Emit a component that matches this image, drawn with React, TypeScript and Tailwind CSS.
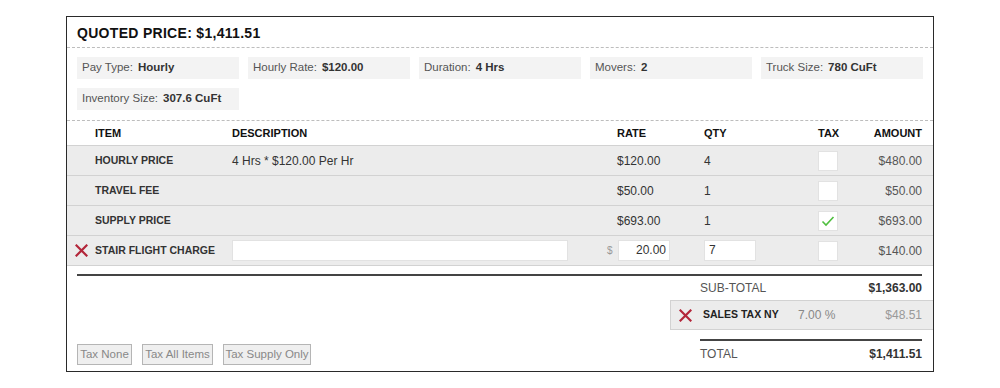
import React from 'react';

const XMark: React.FC = () => (
  <svg width="13" height="13" viewBox="0 0 13 13" className="block">
    <path d="M1.5 1.5 L11.5 11.5 M11.5 1.5 L1.5 11.5" stroke="#b3263a" strokeWidth="2.2" strokeLinecap="square" fill="none" />
  </svg>
);

const Check: React.FC = () => (
  <svg width="14" height="12" viewBox="0 0 14 12" className="block">
    <path d="M1.5 6.5 L5 10 L12.5 2" stroke="#4fbf3f" strokeWidth="1.6" fill="none" />
  </svg>
);

const TaxBox: React.FC<{ checked?: boolean }> = ({ checked }) => (
  <div className="w-[20px] h-[20px] bg-white border border-[#e2e2e2] flex items-center justify-center">
    {checked && <Check />}
  </div>
);

const App: React.FC = () => {
  const info = [
    { label: 'Pay Type:', value: 'Hourly' },
    { label: 'Hourly Rate:', value: '$120.00' },
    { label: 'Duration:', value: '4 Hrs' },
    { label: 'Movers:', value: '2' },
    { label: 'Truck Size:', value: '780 CuFt' },
    { label: 'Inventory Size:', value: '307.6 CuFt' },
  ];

  const items = [
    { name: 'HOURLY PRICE', desc: '4 Hrs * $120.00 Per Hr', rate: '$120.00', qty: '4', tax: false, amount: '$480.00' },
    { name: 'TRAVEL FEE', desc: '', rate: '$50.00', qty: '1', tax: false, amount: '$50.00' },
    { name: 'SUPPLY PRICE', desc: '', rate: '$693.00', qty: '1', tax: true, amount: '$693.00' },
  ];

  // tax buttons with their measured widths
  const buttons = [
    { label: 'Tax None', w: 'w-[55px]' },
    { label: 'Tax All Items', w: 'w-[71px]' },
    { label: 'Tax Supply Only', w: 'w-[88px]' },
  ];

  const cols = 'grid grid-cols-[28px_137px_375px_97px_114px_40px_1fr] items-center';

  return (
    <div className="w-[1000px] h-[388px] bg-white pt-[16px] pl-[66px]" style={{ fontFamily: '"Liberation Sans", Arial, sans-serif' }}>
      <div className="w-[868px] h-[356px] border border-[#2a2a2a] flex flex-col">
        {/* title */}
        <div className="h-[31px] px-[10px] pt-[3px] flex items-center border-b border-dashed border-[#bdbdbd]">
          <span className="text-[14px] font-bold text-[#111] tracking-[0.3px]">QUOTED PRICE: $1,411.51</span>
        </div>

        {/* job info */}
        <div className="px-[10px] pt-[9px] pb-[10px] grid grid-cols-5 gap-x-[9px] gap-y-[9px] border-b border-dashed border-[#bdbdbd]">
          {info.map(i => (
            <div key={i.label} className="h-[22px] bg-[#f3f3f3] px-[5px] flex items-center text-[11.5px]">
              <span className="text-[#555]">{i.label}</span>
              <span className="ml-[5px] font-bold text-[#333]">{i.value}</span>
            </div>
          ))}
        </div>

        {/* table header */}
        <div className={`${cols} h-[24px] text-[11px] font-bold text-[#111]`}>
          <span />
          <span>ITEM</span>
          <span>DESCRIPTION</span>
          <span className="pl-[10px]">RATE</span>
          <span>QTY</span>
          <span>TAX</span>
          <span className="text-right pr-[11px]">AMOUNT</span>
        </div>

        {items.map(it => (
          <div key={it.name} className={`${cols} h-[30px] pt-[1px] bg-[#ececec] border-t border-[#d2d2d2] text-[12px] text-[#333]`}>
            <span />
            <span className="text-[10.5px] font-bold">{it.name}</span>
            <span>{it.desc}</span>
            <span className="pl-[10px]">{it.rate}</span>
            <span>{it.qty}</span>
            <TaxBox checked={it.tax} />
            <span className="text-right pr-[11px] text-[#555]">{it.amount}</span>
          </div>
        ))}

        <div className={`${cols} h-[31px] bg-[#ececec] border-t border-b border-[#d2d2d2] text-[12px] text-[#333]`}>
          <span className="flex justify-center pl-[1px]"><XMark /></span>
          <span className="text-[10.5px] font-bold">STAIR FLIGHT CHARGE</span>
          <div className="h-[21px] w-[336px] bg-white border border-[#e2e2e2]" />
          <div className="flex items-center">
            <span className="w-[11px] text-[10px] text-[#999]">$</span>
            <div className="h-[21px] w-[52px] bg-white border border-[#e2e2e2] text-right pr-[3px] leading-[19px]">20.00</div>
          </div>
          <div className="h-[21px] w-[52px] bg-white border border-[#e2e2e2] pl-[4px] leading-[19px]">7</div>
          <TaxBox />
          <span className="text-right pr-[11px] text-[#555]">$140.00</span>
        </div>

        <div className="mt-[8px] mx-[10px] mr-[11px] h-[2px] bg-[#444]" />

        {/* bottom */}
        <div className="flex-1 flex justify-between">
          <div className="flex items-end gap-[10px] pl-[10px] pb-[6px]">
            {buttons.map(b => (
              <button key={b.label} className={`${b.w} h-[21px] bg-[#efefef] border border-[#b5b5b5] text-[11.5px] text-[#888] whitespace-nowrap`}>{b.label}</button>
            ))}
          </div>
          <div className="w-[263px] flex flex-col">
            <div className="h-[24px] pl-[30px] pr-[11px] flex items-center justify-between text-[12px]">
              <span className="text-[#555]">SUB-TOTAL</span>
              <span className="font-bold text-[#333]">$1,363.00</span>
            </div>
            <div className="h-[30px] bg-[#ececec] border border-r-0 border-[#d2d2d2] pl-[8px] pr-[11px] flex items-center text-[12px]">
              <XMark />
              <span className="ml-[11px] w-[95px] text-[10.5px] font-bold text-[#222]">SALES TAX NY</span>
              <span className="text-[#888]">7.00 %</span>
              <span className="ml-auto text-[#999]">$48.51</span>
            </div>
            <div className="mt-[9px] ml-[30px] mr-[11px] h-[2px] bg-[#444]" />
            <div className="h-[26px] pl-[30px] pr-[11px] flex items-center justify-between text-[12px]">
              <span className="text-[#555]">TOTAL</span>
              <span className="font-bold text-[#333]">$1,411.51</span>
            </div>
          </div>
        </div>
      </div>
    </div>
  );
};

export default App;
